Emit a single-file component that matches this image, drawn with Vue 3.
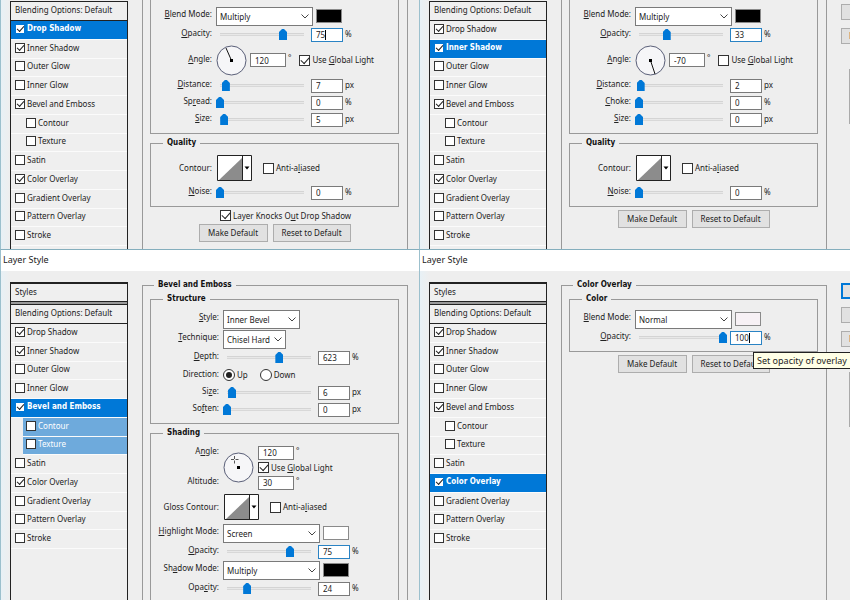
<script setup>
import { reactive } from 'vue'

const names = ['Drop Shadow', 'Inner Shadow', 'Outer Glow', 'Inner Glow', 'Bevel and Emboss', 'Contour', 'Texture', 'Satin', 'Color Overlay', 'Gradient Overlay', 'Pattern Overlay', 'Stroke']
const enabled = ['Drop Shadow', 'Inner Shadow', 'Bevel and Emboss', 'Color Overlay']
const makeStyles = (active) =>
  names.map((name) => ({
    name,
    on: enabled.includes(name),
    sub: name === 'Contour' || name === 'Texture',
    active: name === active,
    tinted: active === 'Bevel and Emboss' && (name === 'Contour' || name === 'Texture')
  }))

// A label is split around its access key: [before, key, after]
const slider = (label, value, unit, extra = {}) => ({ type: 'slider', label, value, unit, max: 100, ...extra })
const blend = (label, value, swatch, extra = {}) => ({ type: 'select', label, value, swatch, size: 'full', ...extra })

const quality = () => ({
  legend: 'Quality',
  rows: [
    { type: 'contour', label: ['', '', 'Contour:'], on: false },
    slider(['', 'N', 'oise:'], 0, '%', { spaced: 's3' })
  ]
})

const panes = reactive([
  {
    id: 'drop', active: 'Drop Shadow', cut: true, buttons: true, knock: true,
    groups: [
      {
        rows: [
          blend(['', 'B', 'lend Mode:'], 'Multiply', 'black'),
          slider(['', 'O', 'pacity:'], 75, '%', { focus: true, caret: true }),
          { type: 'angle', label: ['', 'A', 'ngle:'], value: '120', on: true, needle: [10, 3] },
          slider(['', 'D', 'istance:'], 7, 'px'),
          slider(['Sp', 'r', 'ead:'], 0, '%'),
          slider(['', 'S', 'ize:'], 5, 'px')
        ]
      },
      quality()
    ]
  },
  {
    id: 'inner', active: 'Inner Shadow', cut: true, buttons: true, aside: true,
    groups: [
      {
        rows: [
          blend(['', 'B', 'lend Mode:'], 'Multiply', 'black'),
          slider(['', 'O', 'pacity:'], 33, '%', { focus: true }),
          { type: 'angle', label: ['', 'A', 'ngle:'], value: '-70', on: false, needle: [20, 29] },
          slider(['', 'D', 'istance:'], 2, 'px'),
          slider(['', 'C', 'hoke:'], 0, '%'),
          slider(['', 'S', 'ize:'], 0, 'px')
        ]
      },
      quality()
    ]
  },
  {
    id: 'bevel', active: 'Bevel and Emboss', legend: 'Bevel and Emboss', wideLabels: true,
    groups: [
      {
        legend: 'Structure',
        rows: [
          { type: 'select', label: ['', 'S', 'tyle:'], value: 'Inner Bevel', size: 'mid' },
          { type: 'select', label: ['', 'T', 'echnique:'], value: 'Chisel Hard', size: 'short', spaced: 's1' },
          slider(['', 'D', 'epth:'], 623, '%', { max: 1000 }),
          { type: 'direction', label: ['', '', 'Direction:'], value: 'Up' },
          slider(['Si', 'z', 'e:'], 6, 'px'),
          slider(['So', 'f', 'ten:'], 0, 'px')
        ]
      },
      {
        legend: 'Shading',
        rows: [
          { type: 'light', angle: '120', altitude: '30', on: true },
          { type: 'contour', label: ['', '', 'Gloss Contour:'], on: false, spaced: 's4' },
          blend(['', 'H', 'ighlight Mode:'], 'Screen', 'white', { spaced: 's4' }),
          slider(['', 'O', 'pacity:'], 75, '%', { focus: true }),
          blend(['Sh', 'a', 'dow Mode:'], 'Multiply', 'black', { spaced: 's1' }),
          slider(['Opa', 'c', 'ity:'], 24, '%')
        ]
      }
    ]
  },
  {
    id: 'overlay', active: 'Color Overlay', legend: 'Color Overlay', buttons: true, aside: true,
    groups: [
      {
        legend: 'Color',
        rows: [
          blend(['', 'B', 'lend Mode:'], 'Normal', 'pale'),
          slider(['', 'O', 'pacity:'], 100, '%', { focus: true, caret: true, tip: 'Set opacity of overlay' })
        ]
      }
    ]
  }
])
for (const p of panes) p.styles = makeStyles(p.active)
</script>

<template>
  <div class="board">
    <section v-for="p in panes" :key="p.id" class="pane" :class="{ cut: p.cut }">
      <h2 v-if="!p.cut" class="title">Layer Style</h2>
      <div class="client">
        <nav class="sidebar">
          <div v-if="!p.cut" class="head">Styles</div>
          <div class="blending">Blending Options: Default</div>
          <ul class="styles">
            <li v-for="s in p.styles" :key="s.name" :class="{ sub: s.sub, active: s.active, tinted: s.tinted }">
              <label><input v-model="s.on" type="checkbox" class="check small" />{{ s.name }}</label>
            </li>
          </ul>
        </nav>

        <component :is="p.legend ? 'fieldset' : 'div'" class="outer">
          <legend v-if="p.legend" class="main">{{ p.legend }}</legend>
          <component
            :is="g.legend ? 'fieldset' : 'div'"
            v-for="(g, gi) in p.groups"
            :key="gi"
            class="group"
            :class="[{ open: !g.legend }, 'with-' + g.rows[0].type]"
          >
            <legend v-if="g.legend">{{ g.legend }}</legend>
            <template v-for="(r, ri) in g.rows" :key="ri">
              <div v-if="r.type === 'light'" class="light" :class="{ wide: p.wideLabels }">
                <label class="lbl l1" :for="`${p.id}-ang`">A<u>n</u>gle:</label>
                <label class="lbl l3" :for="`${p.id}-alt`">Altitude:</label>
                <svg class="dial" viewBox="0 0 31 31" aria-hidden="true">
                  <circle cx="15.5" cy="15.5" r="14.5" class="ring" />
                  <path d="M11.5 4v3M11.5 8.500v3M8 7.500h3M12.500 7.500h3" class="cross" />
                  <rect x="14" y="14" width="3" height="3" />
                </svg>
                <span class="cell c1"><input :id="`${p.id}-ang`" v-model="r.angle" type="text" class="num deg" /><i>°</i></span>
                <label class="cell c2"><input v-model="r.on" type="checkbox" class="check" /><span>Use <u>G</u>lobal Light</span></label>
                <span class="cell c3"><input :id="`${p.id}-alt`" v-model="r.altitude" type="text" class="num deg" /><i>°</i></span>
              </div>

              <div v-else class="row" :class="[r.type + '-row', r.spaced, { wide: p.wideLabels }]">
                <label class="lbl" :for="`${p.id}-${gi}-${ri}`">{{ r.label[0] }}<u>{{ r.label[1] }}</u>{{ r.label[2] }}</label>

                <template v-if="r.type === 'select'">
                  <span class="drop" :class="r.size">
                    <select :id="`${p.id}-${gi}-${ri}`"><option>{{ r.value }}</option></select>
                    <svg viewBox="0 0 8 5" aria-hidden="true"><path d="M.5.5 4 4 7.500.5" /></svg>
                  </span>
                  <button v-if="r.swatch" type="button" class="swatch" :class="r.swatch" aria-label="Color"></button>
                </template>

                <template v-else-if="r.type === 'slider'">
                  <input v-model="r.value" type="range" class="range" min="0" :max="r.max" :aria-label="r.label.join('')" />
                  <span class="entry">
                    <input :id="`${p.id}-${gi}-${ri}`" v-model="r.value" type="text" class="num" :class="{ focus: r.focus }" />
                    <b v-if="r.caret" class="caret" :class="{ three: r.value > 99 }"></b>
                    <span v-if="r.tip" class="tip" role="tooltip">{{ r.tip }}</span>
                  </span>
                  <span class="unit">{{ r.unit }}</span>
                </template>

                <template v-else-if="r.type === 'angle'">
                  <svg class="dial" viewBox="0 0 31 31" aria-hidden="true">
                    <circle cx="15.5" cy="15.5" r="14.5" class="ring" />
                    <line x1="15.5" y1="15.5" :x2="r.needle[0]" :y2="r.needle[1]" class="needle" />
                    <rect x="14" y="14" width="3" height="3" />
                  </svg>
                  <input :id="`${p.id}-${gi}-${ri}`" v-model="r.value" type="text" class="num deg" />
                  <i>°</i>
                  <label class="tick"><input v-model="r.on" type="checkbox" class="check" /><span>Use <u>G</u>lobal Light</span></label>
                </template>

                <template v-else-if="r.type === 'contour'">
                  <button :id="`${p.id}-${gi}-${ri}`" type="button" class="curve">
                    <svg viewBox="0 0 35 26" aria-hidden="true">
                      <path d="M0 0h35v26H0z" fill="#fff" />
                      <path d="M2 25 25 3v22z" fill="#8c8c8c" />
                      <path d="M.5.5h34v25H.5zM25.500 1v24" fill="none" stroke="#222" />
                      <path d="M27.500 11.500h5L30 14.500z" fill="#000" />
                    </svg>
                  </button>
                  <label class="tick"><input v-model="r.on" type="checkbox" class="check" /><span>Anti-a<u>l</u>iased</span></label>
                </template>

                <template v-else>
                  <label class="pick"><input :id="`${p.id}-${gi}-${ri}`" v-model="r.value" type="radio" value="Up" class="radio" /><span>Up</span></label>
                  <label class="pick"><input v-model="r.value" type="radio" value="Down" class="radio" /><span>Down</span></label>
                </template>
              </div>
            </template>
          </component>

          <label v-if="p.knock" class="knock"><input v-model="p.knock" type="checkbox" class="check" /><span>Layer Knocks O<u>u</u>t Drop Shadow</span></label>
          <div v-if="p.buttons" class="buttons" :class="{ gap: !p.knock }">
            <button type="button" class="btn make">Make Default</button>
            <button type="button" class="btn reset">Reset to Default</button>
          </div>
        </component>

        <aside v-if="p.aside" class="actions">
          <button v-if="!p.cut" type="button" class="btn ok" aria-label="OK"></button>
          <button type="button" class="btn" aria-label="Cancel"></button>
          <button type="button" class="btn new">New Style...</button>
          <div class="preview"></div>
        </aside>
      </div>
    </section>
  </div>
</template>

<style>
body { margin: 0; overflow: hidden; }
</style>

<style scoped>
* { box-sizing: border-box; }
.board {
  height: 100vh;
  display: grid;
  grid-template-columns: 419fr 431fr;
  grid-template-rows: 250fr 350fr;
  font: 8px/10px "Noto Sans", "Liberation Sans", sans-serif;
  color: #222;
  background: #eee;
}
.pane {
  display: flex;
  flex-direction: column;
  overflow: hidden;
  border-left: 1px solid #9cc0cd;
  background: #eee;
}
.pane.cut { border-bottom: 1px solid #84aebd; }
.title {
  margin: 0;
  padding: 0 0 2px 2px;
  background: #fff;
  font: 9px/19px "Noto Sans", sans-serif;
}
.client { flex: 1; min-height: 0; display: flex; padding: 9px 0 0 9px; background: linear-gradient(90deg, #e8f1f6, #eee 9px); }
.cut .client { padding-top: 0; }

.sidebar { flex: 0 0 118px; border: solid #222; border-width: 0 1px; background: #efefef; margin-top: 2px; }
.cut .sidebar { margin-top: 1px; }
.head { height: 20px; padding: 0 4px; line-height: 16px; border: solid #222; border-width: 2px 0 1px; }
.blending { height: 20px; padding: 0 4px; line-height: 16px; border: solid #222; border-width: 1px 0; }
.head + .blending { margin-top: 2px; box-shadow: 0 -2px #999; }
.styles { height: 225px; margin: 0; padding: 0; list-style: none; display: grid; grid-template-rows: repeat(12, 1fr); }
.styles li { display: flex; align-items: center; padding: 0 0 2px 4px; border-bottom: 1px solid #fbfbfb; }
.styles label { display: flex; align-items: center; gap: 2px; }
.styles li.sub { padding-left: 15px; }
.styles li.active { background: #0078d7; color: #fff; font-family: "DejaVu Sans Condensed", "DejaVu Sans", sans-serif; font-weight: 700; }
.styles li.tinted { margin-left: 12px; padding-left: 3px; background: #6eaadc; color: #fff; }

.check { appearance: none; flex: none; width: 11px; height: 11px; margin: 0; border: 1px solid #333; background: #fff; display: grid; place-items: center; }
.check.small { width: 10px; height: 10px; }
.check:checked::after { content: ""; width: 7px; height: 4px; border: solid #222; border-width: 0 0 1px 1px; transform: translateY(-1px) rotate(-48deg); }
.check.small:checked::after { width: 6px; height: 3px; }
.active .check { border-color: #0078d7; }

.outer { flex: 1; min-width: 0; margin: 0 11px 0 14px; padding: 0 8px 0 7px; border: 1px solid #999; border-width: 0 1px; }
fieldset.outer { border-width: 1px 1px 0; padding-top: 4px; }
.outer:has(+ .actions) { margin-right: 14px; }
legend { margin-left: 12px; padding: 0 4px; font-family: "DejaVu Sans Condensed", "DejaVu Sans", sans-serif; font-weight: 700; color: #111; line-height: 10px; }
legend.main { margin-left: 4px; }
.group { min-width: 0; margin: 0; padding: 6px 0 5px; border: 1px solid #999; }
.group.open { padding-top: 7px; border-top: 0; }
.group.with-contour, .group.with-light { padding-top: 7px; }
.group + .group { margin-top: 4px; }

.row { display: flex; align-items: center; height: 17px; }
.select-row { height: 19px; }
.angle-row { height: 34px; }
.contour-row { height: 26px; }
.direction-row { height: 18px; }
.s1 { margin-top: 1px; }
.s3 { margin-top: 3px; }
.s4 { margin-top: 4px; }
.lbl { flex: 0 0 61px; margin-right: 4px; padding-bottom: 3px; text-align: right; white-space: nowrap; }
.wide > .lbl { flex-basis: 68px; }
.select-row .lbl { padding-bottom: 6px; }
.contour-row .lbl { padding-bottom: 0; }
i { font-style: normal; margin-left: 2px; padding-bottom: 4px; }

.drop { display: grid; align-items: center; height: 19px; }
.drop.full { width: 97px; }
.drop.mid { width: 77px; }
.drop.short { width: 63px; }
.drop > * { grid-area: 1 / 1; }
select { appearance: none; width: 100%; height: 19px; margin: 0; padding: 0 3px; border: 1px solid #7a7a7a; border-radius: 0; background: #fff; color: inherit; font: inherit; }
.drop svg { justify-self: end; width: 8px; height: 5px; margin-right: 4px; pointer-events: none; fill: none; stroke: #444; }
.swatch { width: 26px; height: 14px; margin-left: 3px; margin-bottom: 2px; padding: 0; border: 1px solid #8a8a8a; background: #fff; }
.swatch.black { background: #000; }
.swatch.pale { background: #f7f1f5; }

.range { appearance: none; width: 92px; height: 11px; margin: 0 3px 0 0; background: linear-gradient(#d4d4d4 1px, #e8e8e8 1px 2px, #d8d8d8 2px) center / 84px 3px no-repeat; }
.range::-webkit-slider-thumb { appearance: none; width: 8px; height: 11px; background: #0078d7; clip-path: polygon(0 3px, 3px 0, 5px 0, 100% 3px, 100% 100%, 0 100%); }
.entry { position: relative; display: flex; }
.num { width: 32px; height: 14px; margin: 0; padding: 0 4px; border: 1px solid #7a7a7a; background: #fff; color: inherit; font: inherit; }
.num.deg { width: 36px; }
.num.focus { border-color: #2a83c4; }
.unit { margin-left: 2px; padding-bottom: 2px; }
.caret { position: absolute; left: 14px; top: 2px; width: 1px; height: 10px; background: #000; }
.caret.three { left: 19px; }
.tip { position: absolute; left: 23px; top: 21px; z-index: 2; padding: 0 6px 0 3px; border: 1px solid #222; background: #ffffe6; font: 9px/15px "Noto Sans", sans-serif; white-space: nowrap; }

.dial { flex: none; width: 31px; height: 31px; margin-right: 3px; }
.ring { fill: #f6f6f8; stroke: #5a5f78; }
.needle { stroke: #111; }
.cross { fill: none; stroke: #555; }
.tick { display: flex; align-items: center; gap: 2px; margin-left: 8px; }
.curve { width: 35px; height: 26px; margin: 0 3px 0 1px; padding: 0; border: 0; background: none; display: block; }
.curve svg { display: block; }

.light { display: grid; grid-template: repeat(3, 15px) / 61px 31px 1fr; column-gap: 4px; align-items: center; white-space: nowrap; }
.light.wide { grid-template-columns: 68px 31px 1fr; }
.light .lbl { margin: 0; }
.l1 { grid-area: 1 / 1; }
.l3 { grid-area: 3 / 1; }
.light .dial { grid-area: 1 / 2 / 4 / 3; align-self: center; }
.cell { display: flex; align-items: center; grid-column: 3; gap: 2px; }
.cell i { margin: 0; }
.c1 { grid-row: 1; }
.c2 { grid-row: 2; }
.c3 { grid-row: 3; }

.pick { display: flex; align-items: center; gap: 2px; margin-right: 12px; }
.radio { appearance: none; width: 12px; height: 12px; margin: 0; border: 1px solid #333; border-radius: 50%; background: #fff; display: grid; place-items: center; }
.radio:checked::after { content: ""; width: 6px; height: 6px; border-radius: 50%; background: #222; }

.knock { display: flex; align-items: center; gap: 2px; height: 17px; margin-left: 70px; }
.buttons { display: flex; justify-content: center; gap: 5px; }
.buttons.gap { margin-top: 3px; }
.btn { height: 18px; padding: 0; border: 1px solid #adadad; background: #e1e1e1; color: inherit; font: inherit; white-space: nowrap; }
.make { width: 69px; }
.reset { width: 78px; }

.actions { flex: 0 0 9px; min-width: 0; display: flex; flex-direction: column; gap: 8px; padding-top: 3px; }
.cut .actions { padding-top: 4px; }
.actions .btn { flex: none; width: 76px; height: 16px; }
.actions .ok { border: 2px solid #0078d7; }
.actions .new { padding-left: 7px; text-align: left; color: #b03030; }
.preview { width: 60px; height: 55px; flex: none; margin: 17px 0 0 8px; border: 1px solid #aaa; }
</style>
